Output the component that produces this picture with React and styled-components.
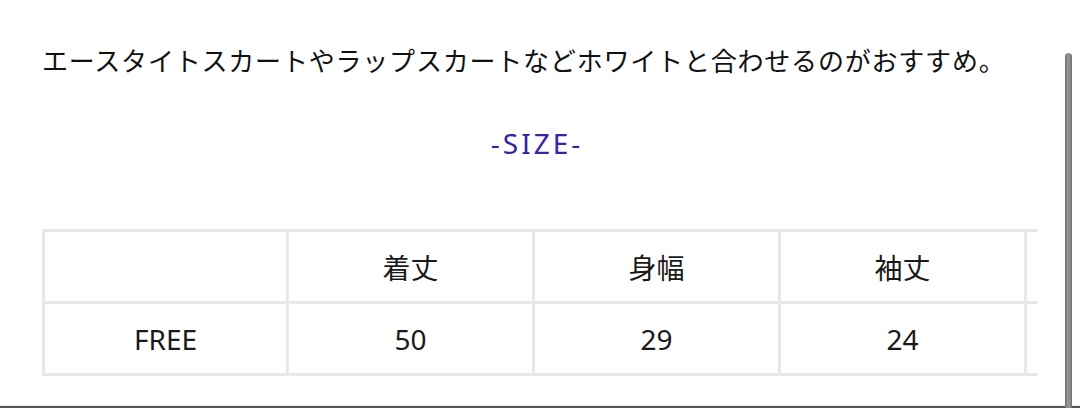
import React from "react";
import styled, { createGlobalStyle } from "styled-components";

const Global = createGlobalStyle`
    html, body {
        margin: 0;
        padding: 0;
        background: #fff;
    }
    body {
        font-family: "Noto Sans", "Noto Sans CJK JP", sans-serif;
        color: #111;
    }
`;

const Page = styled.div`
    position: relative;
    width: 1080px;
    height: 408px;
    overflow: hidden;
    display: flex;
    flex-direction: column;
    padding-left: 42px;
    box-sizing: border-box;
`;

const Lead = styled.p`
    margin: 41px 0 0;
    font-size: 26px;
    line-height: 40px;
    letter-spacing: 0.8px;
    white-space: nowrap;
`;

const Title = styled.h3`
    margin: 42px 0 0;
    width: 990px;
    text-align: center;
    font-size: 28px;
    font-weight: 400;
    line-height: 40px;
    letter-spacing: 3px;
    color: #3a22a4;
`;

const TableWrap = styled.div`
    margin-top: 66px;
    width: 996px;
    overflow: hidden;
`;

const Table = styled.table`
    border-collapse: collapse;
    table-layout: fixed;
    width: 1228px;
`;

const Cell = styled.td`
    width: ${p => (p.$first ? "241px" : "243px")};
    height: 69px;
    padding: 0;
    border: 3px solid #e8e8e6;
    text-align: center;
    vertical-align: middle;
    font-size: 28px;
    color: #1a1a1a;
`;

const Scrollbar = styled.div`
    position: absolute;
    top: 53px;
    right: 8px;
    bottom: 0;
    width: 7px;
    border-radius: 4px 4px 0 0;
    background: linear-gradient(to right, #6c6c6c, #919191 35%, #919191 65%, #6c6c6c);
`;

const BottomEdge = styled.div`
    margin: auto 0 0 -42px;
    height: 2px;
    border-top: 1px solid #ececec;
    background: #555;
`;

const heads = ["", "着丈", "身幅", "袖丈", ""];
const values = ["FREE", "50", "29", "24", ""];

export default function App() {
    return (
        <Page>
            <Global />
            <Lead>エースタイトスカートやラップスカートなどホワイトと合わせるのがおすすめ。</Lead>
            <Title>-SIZE-</Title>
            <TableWrap>
                <Table>
                    <tbody>
                        <tr>
                            {heads.map((h, i) => <Cell key={i} $first={i === 0}>{h}</Cell>)}
                        </tr>
                        <tr>
                            {values.map((v, i) => <Cell key={i} $first={i === 0}>{v}</Cell>)}
                        </tr>
                    </tbody>
                </Table>
            </TableWrap>
            <BottomEdge />
            <Scrollbar />
        </Page>
    );
}
